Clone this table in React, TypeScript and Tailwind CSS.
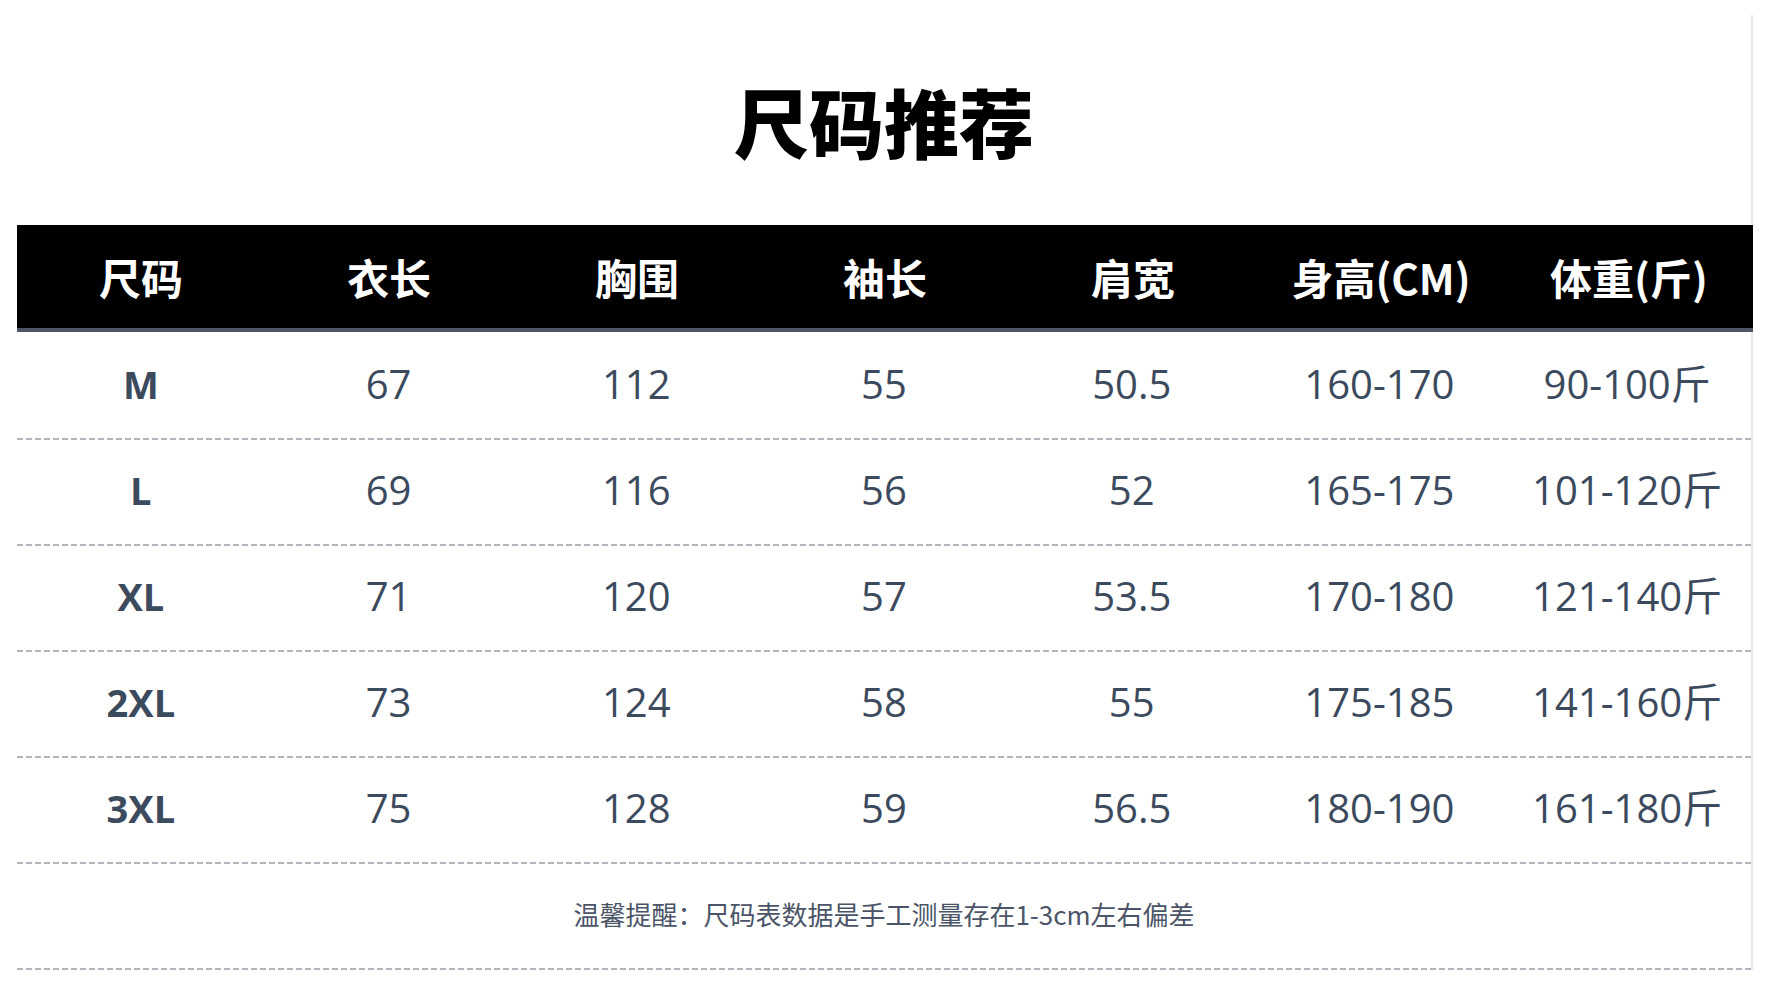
const headers = ["尺码", "衣长", "胸围", "袖长", "肩宽", "身高(CM)", "体重(斤)"];

const rows = [
  ["M", "67", "112", "55", "50.5", "160-170", "90-100斤"],
  ["L", "69", "116", "56", "52", "165-175", "101-120斤"],
  ["XL", "71", "120", "57", "53.5", "170-180", "121-140斤"],
  ["2XL", "73", "124", "58", "55", "175-185", "141-160斤"],
  ["3XL", "75", "128", "59", "56.5", "180-190", "161-180斤"],
];

const Divider = () => (
  <div className="h-[2px] w-full bg-[repeating-linear-gradient(to_right,#b1b6be_0_6px,transparent_6px_9px)]" />
);

export default function App() {
  return (
    <div className="min-h-screen w-full bg-white">
      <div className="ml-[17px] mt-[15px] w-[1736px] border-r-2 border-[#e8e8e8]">
        {/* title */}
        <div className="flex h-[210px] items-center justify-center">
          <h1 className="font-['Noto_Sans_CJK_SC',sans-serif] text-[75px] leading-none font-black text-black">
            尺码推荐
          </h1>
        </div>

        {/* header row */}
        <div className="-mr-[2px] grid h-[107px] grid-cols-7 items-center border-b-4 border-[#4b5565] bg-black">
          {headers.map((h) => (
            <div
              key={h}
              className="text-center font-['Noto_Sans_CJK_SC',sans-serif] text-[42px] leading-none font-bold text-white"
            >
              {h}
            </div>
          ))}
        </div>

        {/* data rows */}
        <div className="pt-[2px]">
          {rows.map((r) => (
            <div key={r[0]}>
              <div className="grid h-[104px] grid-cols-7 items-center pb-[4px] text-[#3c4a5e]">
                {r.map((cell, i) => (
                  <div
                    key={i}
                    className={
                      i === 0
                        ? "text-center font-['Open_Sans','Noto_Sans_CJK_SC',sans-serif] text-[38px] leading-none font-bold"
                        : "text-center font-['Open_Sans','Noto_Sans_CJK_SC',sans-serif] text-[40px] leading-none font-normal"
                    }
                  >
                    {cell}
                  </div>
                ))}
              </div>
              <Divider />
            </div>
          ))}

          {/* footer note */}
          <div className="flex h-[104px] items-center justify-center pb-[4px]">
            <p className="font-['Noto_Sans_CJK_SC',sans-serif] text-[26px] leading-none text-[#4b5567]">
              温馨提醒：尺码表数据是手工测量存在1-3cm左右偏差
            </p>
          </div>
          <Divider />
        </div>
      </div>
    </div>
  );
}
